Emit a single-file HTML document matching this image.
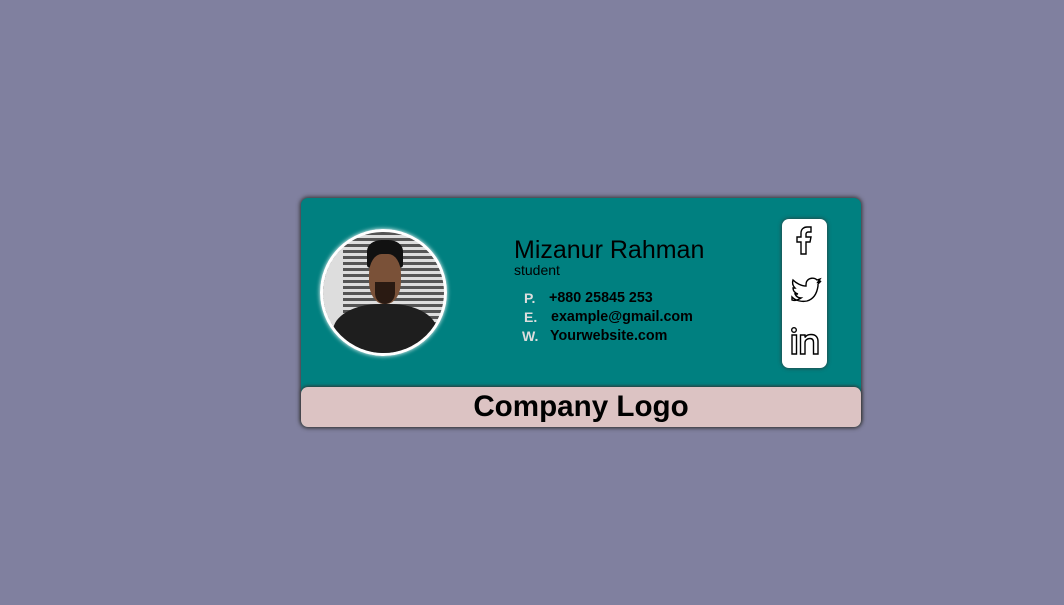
<!DOCTYPE html>
<html><head><style>
body{margin:0;width:1064px;height:605px;background:#80809f;font-family:"Liberation Sans",sans-serif;position:relative;overflow:hidden}
.card{position:absolute;left:301px;top:198px;width:560px;height:229px;background:#008080;border-radius:7px;box-shadow:0 0 4px 1px #333}
.photo{position:absolute;left:19px;top:31px;width:121px;height:121px;border-radius:50%;border:3px solid #fff;box-shadow:0 0 4px #fff;overflow:hidden;background:repeating-linear-gradient(180deg,#555 0 3px,#ddd 3px 6px)}
.name{position:absolute;left:213px;top:38px;font-size:25px;color:#000}
.role{position:absolute;left:213px;top:64px;font-size:14px}
.info{position:absolute;font-size:14.3px;font-weight:bold}
.lbl{position:absolute;font-size:14px;font-weight:bold;color:#ddd}
.soc{position:absolute;left:481px;top:21px;width:45px;height:149px;background:#fff;border-radius:7px;box-shadow:0 0 4px #333}
.foot{position:absolute;left:0;top:189px;width:560px;height:40px;background:#dcc3c3;border-radius:7px;box-shadow:0 -1px 3px #333;text-align:center;font-size:29.6px;font-weight:bold;line-height:40px}
</style></head><body>
<div class="card">
<div class="photo">
<div style="position:absolute;left:0;top:0;width:20px;height:121px;background:#ddd"></div>
<div style="position:absolute;left:44px;top:8px;width:36px;height:28px;background:#111;border-radius:40% 40% 10% 10%"></div>
<div style="position:absolute;left:46px;top:22px;width:32px;height:50px;background:#7a5138;border-radius:40% 40% 45% 45%"></div>
<div style="position:absolute;left:52px;top:50px;width:20px;height:22px;background:#2a1a12;border-radius:0 0 50% 50%"></div>
<div style="position:absolute;left:10px;top:72px;width:104px;height:60px;background:#1e1e1e;border-radius:45% 45% 0 0"></div>
</div>
<div class="name">Mizanur Rahman</div>
<div class="role">student</div>
<div class="lbl" style="left:223px;top:92px">P.</div><div class="info" style="left:248px;top:92px">+880 25845 253</div>
<div class="lbl" style="left:223px;top:111px">E.</div><div class="info" style="left:250px;top:111px">example@gmail.com</div>
<div class="lbl" style="left:221px;top:130px">W.</div><div class="info" style="left:249px;top:130px">Yourwebsite.com</div>
<div class="soc">
<svg width="45" height="149" viewBox="0 0 45 149" fill="none" stroke="#000" stroke-width="1.4">
<path d="M19 35V23h-4v-5h4v-4c0-4 3-6 6-6h4v5h-3c-1 0-2 1-2 2v3h5l-1 5h-4v12z"/>
<path d="M10 78c4 4 10 5 15 4 7-2 10-8 11-15l0-2 3-3-3 1 2-3-3 1c-3-3-8-2-10 1-1 1-1 3-1 5-5 0-10-3-13-6-1 3 0 6 2 8h-2c0 3 2 5 5 6h-3c1 2 3 4 6 4-3 2-6 3-9 2z"/>
<circle cx="12" cy="111" r="2.3"/><path d="M10 116h4.5v19h-4.5zM18.5 116h4.5v2.5c1-2 3.5-3 6-3 5 0 7 3 7 7v12.5h-4.5v-11.5c0-2.5-1-4-3.5-4s-5 1.5-5 4v11.5h-4.5z"/>
</svg>
</div>
<div class="foot">Company Logo</div>
</div>
</body></html>
